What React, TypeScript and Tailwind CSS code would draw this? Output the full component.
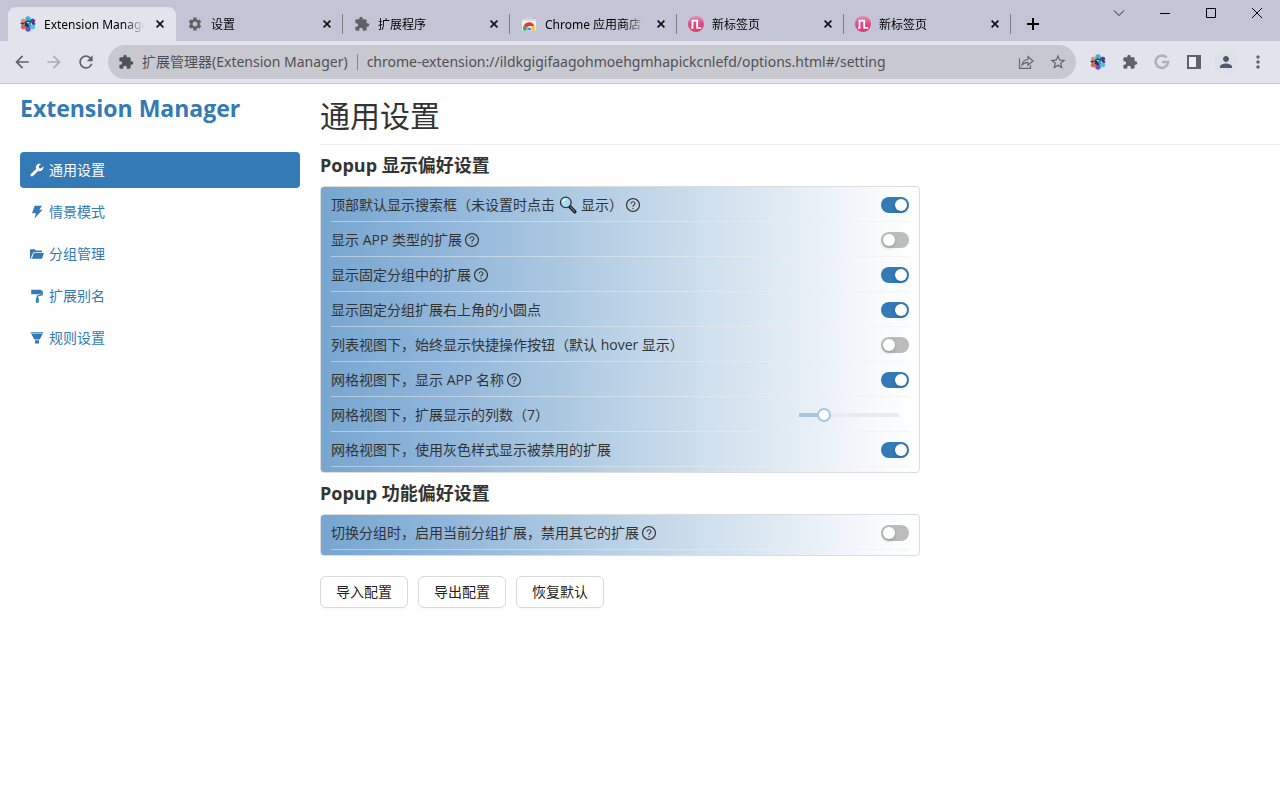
import type { ReactNode } from 'react';
import { useState } from 'react';
import { MdArrowBack, MdArrowForward, MdExtension, MdMoreVert, MdPerson, MdRefresh, MdSettings, MdStarOutline } from 'react-icons/md';
import { AiOutlineQuestionCircle } from 'react-icons/ai';

function HexLogo() {
  return (
    <svg viewBox="0 0 16 16" className="size-4 shrink-0" aria-hidden="true">
      <path d="M8 0l2.600 1.500v2.700L8 5.700 5.400 4.200V1.500z" fill="#35b3dc" />
      <path d="M3.400 2.400l2.500 1.400v2.400L3.400 7.600.9 6.200V3.800z" fill="#ee8a68" />
      <path d="M12.600 2.400l2.500 1.400v2.400l-2.500 1.400-2.500-1.400V3.800z" fill="#4b4692" />
      <path d="M3.400 8.400l2.500 1.400v2.400l-2.500 1.400-2.500-1.400V9.800z" fill="#e2604f" />
      <path d="M12.600 8.400l2.500 1.400v2.400l-2.500 1.400-2.500-1.400V9.800z" fill="#4cc3e6" />
      <path d="M8 10.300l2.600 1.500v2.700L8 16l-2.600-1.500v-2.700z" fill="#6a55c8" />
      <path d="M7.800 4.300l3.200 1.800v3.700l-3.200 1.800-3.200-1.800V6.100z" fill="#2b2f45" />
      <path d="M7.800 7.600l3.200-1.500v3.500l-2 1.200z" fill="#2fa0c8" />
      <path d="M0 7.400l2.600-1.200 2.200 1.300-2.400 1.400z" fill="#2d3a66" />
      <path d="M12.500 6l3.200 1.800-1.500 1.400-2.600-1.300z" fill="#3a3484" />
      <path d="M6.200 6.600l1.600-.8 1.500.8-1.500.9z" fill="#dfe6ee" />
    </svg>
  );
}

function StoreLogo() {
  return (
    <svg viewBox="0 0 16 16" className="size-4 shrink-0" aria-hidden="true">
      <path d="M5.500 3V1.500h5V3" fill="none" stroke="#d4d4d8" strokeWidth="1.200" />
      <path d="M1 3h14v11.500H1z" fill="#f1f1f1" />
      <path d="M1 3h14v2H1z" fill="#dedee0" />
      <path d="M2.400 14.500a6 6 0 0 1 .5-5.600l3 4a2.500 2.500 0 0 0 0 1.600z" fill="#3aa757" />
      <path d="M2.900 8.900a6 6 0 0 1 10.500 1H8.300a2.700 2.700 0 0 0-2.500 2.500z" fill="#e33b2e" />
      <path d="M13.400 9.900a6 6 0 0 1 .2 4.600h-3.100a3 3 0 0 0-1-4.600z" fill="#fbc116" />
      <path d="M5.700 14.500a2.500 2.500 0 1 1 4.800 0z" fill="#4688f1" stroke="#fff" strokeWidth=".5" />
    </svg>
  );
}

function PinkLogo() {
  return (
    <svg viewBox="0 0 16 16" className="size-4 shrink-0" aria-hidden="true">
      <defs>
        <linearGradient id="pink" x1="0" y1="0" x2="0" y2="1">
          <stop offset="0" stopColor="#e58fb4" />
          <stop offset=".5" stopColor="#df4a84" />
          <stop offset="1" stopColor="#e23a72" />
        </linearGradient>
      </defs>
      <circle cx="8" cy="8" r="8" fill="url(#pink)" />
      <path d="M3 11.800h1.500V4.700h4.700v7.100h4" fill="none" stroke="#fff" strokeWidth="1.800" />
    </svg>
  );
}

function CloseIcon() {
  return (
    <svg viewBox="0 0 8 8" className="size-2" fill="none" stroke="#111" strokeWidth="1.700" aria-hidden="true">
      <path d="M.6.6l6.800 6.800M7.400.6L.6 7.400" />
    </svg>
  );
}

const glyphs: Record<string, ReactNode> = {
  wrench: <path d="M13.400 3.300l-2.300 2.300-1.900-.5-.5-1.900L11 .9C9.400.4 7.600.8 6.600 2.200c-.9 1.200-1 2.600-.5 3.800L.9 11.100c-.6.6-.6 1.400 0 2s1.500.6 2.100 0l5.100-5.100c1.300.5 2.800.3 3.900-.7 1.200-1 1.700-2.600 1.400-4z" />,
  flash: <path d="M4.700.8h7.300L9.300 4.700h3.300L4.400 13.600 6 8.300H2z" />,
  folder: <path d="M0 3.200c0-.6.4-1 1-1h3.700l1.200 1.300h5.200c.6 0 1 .4 1 1v.8H3.500L1.300 9.500V11.800H1c-.6 0-1-.4-1-1zM4 6.100h10l-1.800 5.200c-.1.300-.4.500-.8.500H1.700z" />,
  roller: <path d="M1.200.8h10.300v1.200h1.400v4.200L8 7.600v1.200h.8v4.900H5.900V8.800h.8V6.600l5-1.400V3.300h-.2v1.900H1.200z" />,
  funnel: <path d="M.8 1.300h12.400v1.200H.8zM1.400 3.100h11.200L9.700 8.400H4.300zM5 9.200h4v3.200H5z" />,
};

function Glyph({ name }: { name: string }) {
  return (
    <svg viewBox="0 0 14 14" className="size-3.5 shrink-0" fill="currentColor" aria-hidden="true">
      {glyphs[name]}
    </svg>
  );
}

const tabs: { title: string; icon: ReactNode }[] = [
  { title: '设置', icon: <MdSettings className="size-4 shrink-0 text-[#5f6368]" /> },
  { title: '扩展程序', icon: <MdExtension className="size-4 shrink-0 text-[#5f6368]" /> },
  { title: 'Chrome 应用商店', icon: <StoreLogo /> },
  { title: '新标签页', icon: <PinkLogo /> },
  { title: '新标签页', icon: <PinkLogo /> },
];

function TabStrip() {
  return (
    <div className="flex h-[41px] bg-[#c4c4d7] pl-2 font-['Noto_Sans','Noto_Sans_CJK_SC',sans-serif] text-xs text-black">
      <div className="mt-[7px] flex w-[168px] items-center rounded-t-lg bg-[#e3e3ec] pr-3 pl-3">
        <HexLogo />
        <span className="ml-2 min-w-0 flex-1 overflow-hidden pt-0.5 whitespace-nowrap [mask-image:linear-gradient(to_right,#000_80%,transparent)]">Extension Manager</span>
        <button className="ml-3 shrink-0" aria-label="Close tab"><CloseIcon /></button>
      </div>
      {tabs.map((tab, i) => (
        <div key={i} className="mt-[7px] flex w-[167px] items-center">
          <div className="flex min-w-0 flex-1 items-center pr-[11px] pl-[11px]">
            {tab.icon}
            <span className="ml-2 min-w-0 flex-1 overflow-hidden pt-0.5 whitespace-nowrap [mask-image:linear-gradient(to_right,#000_80%,transparent)]">{tab.title}</span>
            <button className="ml-3 shrink-0" aria-label="Close tab"><CloseIcon /></button>
          </div>
          <div className="h-5 w-px bg-[#7c7c88]" />
        </div>
      ))}
      <button className="mt-[7px] flex w-11 items-center justify-center" aria-label="New tab">
        <svg viewBox="0 0 12 12" className="size-3" stroke="#000" strokeWidth="2"><path d="M6 0v12M0 6h12" /></svg>
      </button>
      <div className="ml-auto flex h-[26px] shrink-0 items-center">
        <button className="flex w-[46px] justify-center" aria-label="Search tabs">
          <svg viewBox="0 0 12 12" className="size-3" fill="none" stroke="#222"><path d="M1 3.500l5 5 5-5" /></svg>
        </button>
        <button className="flex w-[46px] justify-center" aria-label="Minimize">
          <svg viewBox="0 0 10 10" className="size-2.5" stroke="#000"><path d="M0 5.500h10" /></svg>
        </button>
        <button className="flex w-[46px] justify-center" aria-label="Maximize">
          <svg viewBox="0 0 10 10" className="size-2.5" fill="none" stroke="#000"><path d="M.5.5h9v9h-9z" /></svg>
        </button>
        <button className="flex w-[46px] justify-center" aria-label="Close">
          <svg viewBox="0 0 10 10" className="size-2.5" fill="none" stroke="#000"><path d="M0 0l10 10M10 0L0 10" /></svg>
        </button>
      </div>
    </div>
  );
}

function Toolbar() {
  return (
    <div className="flex h-[43px] items-center border-b border-[#c6c6d0] bg-[#e3e3ec] font-['Noto_Sans','Noto_Sans_CJK_SC',sans-serif] text-[#5f6368]">
      <div className="flex w-[108px] shrink-0 items-center gap-3 pl-3">
        <button aria-label="Back"><MdArrowBack className="size-5" /></button>
        <button aria-label="Forward" className="text-[#adadb3]"><MdArrowForward className="size-5" /></button>
        <button aria-label="Reload"><MdRefresh className="size-5" /></button>
      </div>
      <div className="flex h-[34px] min-w-0 flex-1 items-center rounded-full bg-[#c8c8d0] pr-[9px] pl-2.5 text-sm text-[#505054]">
        <MdExtension className="size-4 shrink-0 text-[#505458]" />
        <span className="ml-2 whitespace-nowrap">扩展管理器(Extension Manager)</span>
        <span className="mx-[9px] h-4 w-px bg-[#85858c]" />
        <input aria-label="Address" className="min-w-0 flex-1 bg-transparent outline-none" defaultValue="chrome-extension://ildkgigifaagohmoehgmhapickcnlefd/options.html#/setting" />
        <button aria-label="Share" className="shrink-0">
          <svg viewBox="0 0 16 16" className="size-4" fill="none" stroke="#66666c" strokeWidth="1.200"><path d="M1.500 4.500v9.800h11v-3M4 11.200c.4-3.500 2.500-5.500 6-5.700V2.600L15 7l-5 4.300V8.400c-2.500 0-4.500.8-6 2.800z" /></svg>
        </button>
        <button aria-label="Bookmark" className="ml-[15px] shrink-0"><MdStarOutline className="size-[18px] text-[#5f6368]" /></button>
      </div>
      <div className="flex shrink-0 items-center pl-1.5">
        <button aria-label="Extension Manager" className="flex w-8 justify-center"><HexLogo /></button>
        <button aria-label="Extensions" className="flex w-8 justify-center"><MdExtension className="size-4" /></button>
        <button aria-label="Google" className="flex w-8 justify-center">
          <svg viewBox="0 0 16 16" className="size-4" fill="none" stroke="#b0b0b5" strokeWidth="2.600"><path d="M12.700 3.700A6.200 6.200 0 1 0 14.100 8H8" /></svg>
        </button>
        <button aria-label="Side panel" className="flex w-8 justify-center">
          <svg viewBox="0 0 14 14" className="size-3.5"><path d="M0 0h14v14H0z" fill="#5f6368" /><path d="M2 2h7v10H2z" fill="#eeeef4" /></svg>
        </button>
        <button aria-label="Profile" className="mx-1 flex size-6 items-center justify-center rounded-full bg-[#dfe1e8] text-[#4d5a70]"><MdPerson className="size-[18px]" /></button>
        <button aria-label="Menu" className="flex w-8 justify-center"><MdMoreVert className="size-5" /></button>
        <span className="w-1.5" />
      </div>
    </div>
  );
}

const nav = [
  { icon: 'wrench', label: '通用设置' },
  { icon: 'flash', label: '情景模式' },
  { icon: 'folder', label: '分组管理' },
  { icon: 'roller', label: '扩展别名' },
  { icon: 'funnel', label: '规则设置' },
];

function Sidebar() {
  return (
    <aside className="w-[280px] shrink-0 pt-2">
      <h1 className="h-[60px] text-[23px] leading-[33px] font-bold text-[#337ab7]">Extension Manager</h1>
      <nav className="flex flex-col gap-1.5">
        {nav.map((item, i) => (
          <a key={item.label} href={`#${item.icon}`} className={i === 0 ? 'flex h-9 items-center gap-[5px] rounded bg-[#337ab7] px-2.5 text-white' : 'flex h-9 items-center gap-[5px] rounded px-2.5 text-[#337ab7]'}>
            <Glyph name={item.icon} />
            {item.label}
          </a>
        ))}
      </nav>
    </aside>
  );
}

function Row({ id, label, help, children }: { id: string; label: ReactNode; help?: boolean; children: ReactNode }) {
  return (
    <div className="flex h-[35px] items-center justify-between border-b border-[#eeeeee]/50 pt-0.5">
      <label htmlFor={id} className="flex items-center whitespace-nowrap">
        {label}
        {help && <AiOutlineQuestionCircle className="ml-0.5 size-4" />}
      </label>
      {children}
    </div>
  );
}

function Toggle({ id, on }: { id: string; on?: boolean }) {
  return (
    <input
      id={id}
      type="checkbox"
      role="switch"
      defaultChecked={on}
      className="h-4 w-7 cursor-pointer appearance-none rounded-full bg-[#bcbcbd] p-0.5 before:block before:size-3 before:rounded-full before:bg-white before:shadow-[0_2px_4px_rgba(0,35,11,0.2)] checked:bg-[#337ab7] checked:before:ml-3"
    />
  );
}

function Panel({ children }: { children: ReactNode }) {
  return (
    <div className="max-w-[600px] rounded border border-[#dddddd] bg-[linear-gradient(90deg,#77a6d0_0%,#90b5da_20%,#a8c6e0_38%,#c6d9ea_58%,#dfeaf3_76%,#edf2f9_85%,#f8fafc_93%,#ffffff_100%)] px-2.5 pb-[5px]">
      {children}
    </div>
  );
}

function Settings() {
  const [columns, setColumns] = useState(7);
  return (
    <main className="min-w-0 flex-1 text-[#333333]">
      <h2 className="border-b border-[#eeeeee] pt-[13px] pb-[9px] text-[30px] leading-[38px]">通用设置</h2>
      <h3 className="py-2.5 text-lg leading-[21px] font-bold">Popup 显示偏好设置</h3>
      <Panel>
        <Row id="search" help label={<>顶部默认显示搜索框（未设置时点击 <Magnifier /> 显示）</>}><Toggle id="search" on /></Row>
        <Row id="app" help label="显示 APP 类型的扩展"><Toggle id="app" /></Row>
        <Row id="fixed" help label="显示固定分组中的扩展"><Toggle id="fixed" on /></Row>
        <Row id="dot" label="显示固定分组扩展右上角的小圆点"><Toggle id="dot" on /></Row>
        <Row id="hover" label="列表视图下，始终显示快捷操作按钮（默认 hover 显示）"><Toggle id="hover" /></Row>
        <Row id="name" help label="网格视图下，显示 APP 名称"><Toggle id="name" on /></Row>
        <Row id="columns" label={`网格视图下，扩展显示的列数（${columns}）`}>
          <input
            id="columns"
            type="range"
            min={4}
            max={16}
            value={columns}
            onChange={(e) => setColumns(Number(e.target.value))}
            className="mr-[3px] h-3.5 w-[114px] appearance-none bg-transparent [&::-webkit-slider-runnable-track]:h-1 [&::-webkit-slider-runnable-track]:bg-[linear-gradient(90deg,#a6c8df_25%,#e9ebef_25%)] [&::-webkit-slider-runnable-track]:bg-[length:100px_4px] [&::-webkit-slider-runnable-track]:bg-center [&::-webkit-slider-runnable-track]:bg-no-repeat [&::-webkit-slider-thumb]:-mt-[5px] [&::-webkit-slider-thumb]:size-3.5 [&::-webkit-slider-thumb]:appearance-none [&::-webkit-slider-thumb]:rounded-full [&::-webkit-slider-thumb]:border-2 [&::-webkit-slider-thumb]:border-[#a6c8df] [&::-webkit-slider-thumb]:bg-white"
          />
        </Row>
        <Row id="gray" label="网格视图下，使用灰色样式显示被禁用的扩展"><Toggle id="gray" on /></Row>
      </Panel>
      <h3 className="py-2.5 text-lg leading-[21px] font-bold">Popup 功能偏好设置</h3>
      <Panel>
        <Row id="switch" help label="切换分组时，启用当前分组扩展，禁用其它的扩展"><Toggle id="switch" /></Row>
      </Panel>
      <div className="mt-5 flex gap-2.5">
        {['导入配置', '导出配置', '恢复默认'].map((text) => (
          <button key={text} className="h-8 rounded-md border border-[#d9d9d9] bg-white px-[15px] text-black/90 shadow-[0_2px_0_rgba(0,0,0,0.02)]">{text}</button>
        ))}
      </div>
    </main>
  );
}

function Magnifier() {
  return (
    <svg viewBox="0 0 18 18" className="mx-1 size-[18px]" aria-hidden="true">
      <path d="M10.500 10.200l5.300 5.500" stroke="#1c1c1c" strokeWidth="3.400" strokeLinecap="round" />
      <path d="M11.800 11.300l3.800 4" stroke="#777" strokeWidth="1.200" strokeLinecap="round" />
      <circle cx="6.800" cy="6.400" r="5.300" fill="#a9dcf8" stroke="#333" strokeWidth="1.300" />
      <path d="M4 6a3 3 0 0 1 3-2.800" fill="none" stroke="#fff" strokeWidth="1.400" />
    </svg>
  );
}

export default function App() {
  return (
    <div className="min-h-screen bg-white font-['Open_Sans','Noto_Sans_CJK_SC',sans-serif] text-sm">
      <TabStrip />
      <Toolbar />
      <div className="flex gap-5 pl-5">
        <Sidebar />
        <Settings />
      </div>
    </div>
  );
}
